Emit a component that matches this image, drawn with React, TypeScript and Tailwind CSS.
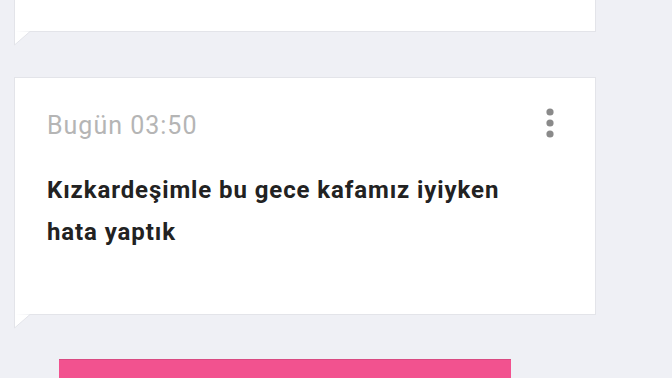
import React from "react";

const Tail = () => (
	<svg width="18" height="15" viewBox="0 0 18 15" className="block -mt-px">
		<path d="M0.5 0 L0.5 14 L16 0.5 Z" fill="#ffffff" />
		<path d="M0.5 0 L0.5 14 L16 0.5" fill="none" stroke="#e3e4e9" strokeWidth="1" />
	</svg>
);

const MoreIcon = () => (
	<svg width="10" height="32" viewBox="0 0 10 32" className="block">
		<circle cx="5" cy="5" r="3.6" fill="#8a8a8a" />
		<circle cx="5" cy="16" r="3.6" fill="#8a8a8a" />
		<circle cx="5" cy="27" r="3.6" fill="#8a8a8a" />
	</svg>
);

export default function App() {
	return (
		<div
			className="h-[378px] w-[672px] overflow-hidden bg-[#eff0f5]"
			style={{ fontFamily: "Roboto, 'Liberation Sans', sans-serif" }}
		>
			<div className="flex flex-col pl-[14px] pr-[76px]">
				<div>
					<div className="h-[32px] border-x border-b border-[#e3e4e9] bg-white" />
					<Tail />
				</div>

				<div className="mt-[31px]">
					<div className="h-[238px] border border-[#e3e4e9] bg-white px-[32px] pt-[33px]">
						<div className="flex items-start justify-between">
							<p className="text-[25px] leading-[30px] tracking-[1px] text-[#b5b5b5]">
								Bugün 03:50
							</p>
							<div className="-mt-[4px] mr-[8px]">
								<MoreIcon />
							</div>
						</div>
						<p className="mt-[28px] max-w-[480px] text-[24px] font-bold leading-[42px] tracking-[0.9px] text-[#222222]">
							Kızkardeşimle bu gece kafamız iyiyken hata yaptık
						</p>
					</div>
					<Tail />
				</div>
			</div>

			<div className="ml-[59px] mt-[30px] h-[20px] w-[452px] border-t border-[#d94a82] bg-[#f2528f]" />
		</div>
	);
}
